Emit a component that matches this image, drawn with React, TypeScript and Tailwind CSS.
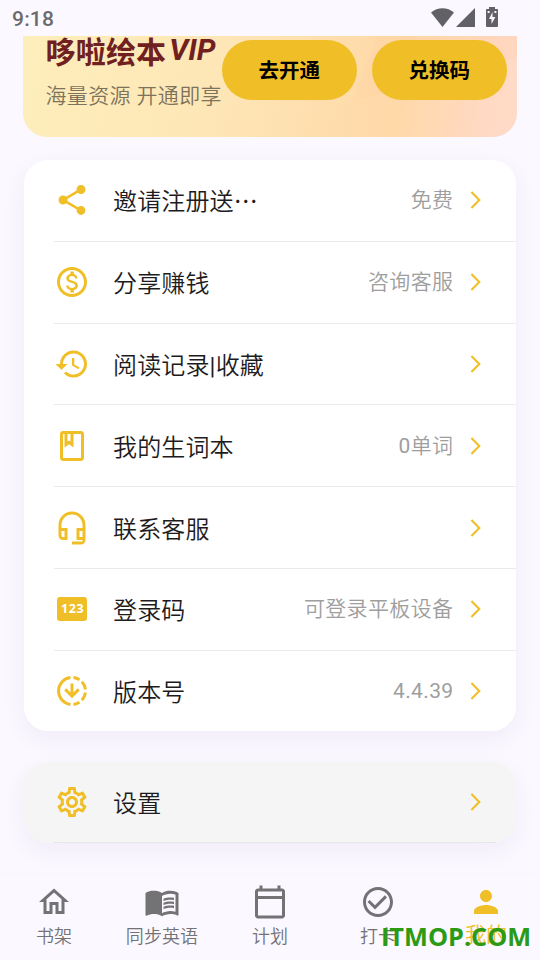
import type { ReactNode } from "react";
import type { IconType } from "react-icons";
import {
  MdShare,
  MdOutlineMonetizationOn,
  MdHistory,
  MdOutlineClass,
  MdOutlineHeadsetMic,
  MdOutlineSettings,
  MdOutlineHome,
  MdMenuBook,
  MdOutlineCalendarToday,
  MdCheckCircleOutline,
  MdPerson,
} from "react-icons/md";

type IconProps = { className?: string };
type Icon = IconType | ((props: IconProps) => ReactNode);
type Item = { icon: Icon; title: string; ellipsis?: boolean; value?: string };

function PinIcon({ className }: IconProps) {
  return (
    <svg className={className} viewBox="0 0 36 36" fill="currentColor">
      <rect x="3" y="6" width="30" height="24" rx="3" />
      <text x="18.600" y="22.300" textAnchor="middle" className="fill-white font-['Open_Sans',sans-serif] text-[12.5px] font-bold tracking-[0.5px]">
        123
      </text>
    </svg>
  );
}

function DownloadingIcon({ className }: IconProps) {
  return (
    <svg className={className} viewBox="0 0 24 24" fill="none" stroke="currentColor" strokeWidth="2">
      <path d="M11 3.060A9 9 0 0 0 11 20.940M13 3.060A9 9 0 0 1 17 4.520M18.600 5.880A9 9 0 0 1 20.940 11M20.940 13A9 9 0 0 1 18.600 18.120M17 19.480A9 9 0 0 1 13 20.940" />
      <path d="M12 7V15.300M7.500 10.900 12 15.400 16.500 10.900" />
    </svg>
  );
}

const items: Item[] = [
  { icon: MdShare, title: "邀请注册送", ellipsis: true, value: "免费" },
  { icon: MdOutlineMonetizationOn, title: "分享赚钱", value: "咨询客服" },
  { icon: MdHistory, title: "阅读记录|收藏" },
  { icon: MdOutlineClass, title: "我的生词本", value: "0单词" },
  { icon: MdOutlineHeadsetMic, title: "联系客服" },
  { icon: PinIcon, title: "登录码", value: "可登录平板设备" },
  { icon: DownloadingIcon, title: "版本号", value: "4.4.39" },
];

const tabs: { icon: IconType; label: string; active?: boolean }[] = [
  { icon: MdOutlineHome, label: "书架" },
  { icon: MdMenuBook, label: "同步英语" },
  { icon: MdOutlineCalendarToday, label: "计划" },
  { icon: MdCheckCircleOutline, label: "打卡" },
  { icon: MdPerson, label: "我的", active: true },
];

// Latin runs use the regular weight, Chinese runs the lighter inherited one.
function Mixed({ text }: { text: string }) {
  return text.split(/([\x21-\x7e]+)/).map((run, i) =>
    i % 2 === 1 ? (
      <span key={i} className="font-normal">
        {run}
      </span>
    ) : (
      run
    ),
  );
}

function Chevron() {
  return (
    <svg className="ml-[16px] h-[18px] w-[12px] shrink-0" viewBox="0 0 12 18" fill="none" stroke="#f0bf28" strokeWidth="2.1">
      <path d="M1.400 0.900 9.300 9 1.400 17.100" />
    </svg>
  );
}

function Row({ icon: RowIcon, title, ellipsis, value }: Item) {
  return (
    <div className="flex h-[80.8px] items-center pr-[34.500px] pl-[30px]">
      <RowIcon className="size-9 shrink-0 text-[#f0bf28]" />
      <span className="ml-[23px] flex-1 pt-[4px] text-[24px] leading-9 tracking-[0.15px] text-[#1d1b20]">
        <Mixed text={title} />
        {ellipsis && <span className="font-['Noto_Sans_CJK_SC',sans-serif] leading-none font-normal">…</span>}
      </span>
      <span className="text-[21px] leading-[30px] tracking-[0.375px] text-[#9e9e9e]">
        <Mixed text={value ?? ""} />
      </span>
      <Chevron />
    </div>
  );
}

function PillButton({ children }: { children: ReactNode }) {
  return (
    <button className="h-[60px] w-[135px] rounded-full bg-[#f0bf28] pt-[3px] text-[20.5px] font-bold text-black">
      {children}
    </button>
  );
}

function StatusBar() {
  return (
    <div className="flex h-9 shrink-0 justify-between pr-[42px] pl-3">
      <span className="pt-[4px] text-[21px] leading-[30px] font-medium tracking-[0.2px] text-[#6b6a6e]">9:18</span>
      <svg className="mt-[6px] h-[22px] w-[68px]" viewBox="0 0 68 22" fill="#626165">
        <path d="M1 6.500C7.500 .7 17.500 .7 24 6.500L12.500 21Z" />
        <path d="M26 21 45 2V21Z" />
        <path
          fillRule="evenodd"
          d="M59 1h6v2h2.200q.8 0 .8 .8V20q0 1-1 1H57q-1 0-1-1V3.800q0-.8 .8-.8H59ZM57.600 5v2h2V5ZM64.400 5v2h2V5ZM62.500 6 59 13h2.500v5L65.400 11H62.500Z"
        />
      </svg>
    </div>
  );
}

export default function App() {
  return (
    <div className="relative flex h-[960px] w-[540px] flex-col overflow-hidden bg-[#fbf8ff] font-[Roboto,'Noto_Sans_CJK_SC',sans-serif] font-[350]">
      <StatusBar />
      <main className="flex flex-1 flex-col">
        <section className="relative ml-[22.600px] flex h-[101px] w-[494.600px] shrink-0 overflow-hidden rounded-b-[24px] bg-[linear-gradient(100deg,#fdeebb_0%,#fee6b6_40%,#ffd8a8_75%,#ffdcc8_97%)]">
          <svg className="absolute inset-0 h-full w-full" viewBox="0 0 494 101">
            <path d="M354 0 328 66C350 60 410 45 494 22V0Z" fill="#ffc99a" fillOpacity=".15" />
            <path d="M419 101 450 0H494V101Z" fill="#ffd2c4" fillOpacity=".15" />
          </svg>
          <div className="relative w-[199.200px] shrink-0 pl-[22.900px] whitespace-nowrap">
            <h1 className="flex h-[34px] text-[#702020]">
              <span className="text-[30px] leading-[34px] font-bold tracking-[0.2px]">哆啦绘本</span>
              <span className="ml-[3px] text-[30px] leading-[28px] font-bold italic">VIP</span>
            </h1>
            <p className="mt-[11px] text-[21px] leading-[30px] tracking-[0.375px] text-[#7d735b]">海量资源 开通即享</p>
          </div>
          <div className="relative mt-[4px] flex gap-[15px]">
            <PillButton>去开通</PillButton>
            <PillButton>兑换码</PillButton>
          </div>
        </section>

        <section className="mt-[23px] ml-6 h-[571px] w-[492px] shrink-0 rounded-[24px] bg-white shadow-[0_8px_24px_rgba(80,55,115,0.06)]">
          {items.map((item, i) => (
            <div key={item.title}>
              {i > 0 && <div className="ml-[30px] h-px bg-[#ebebeb]" />}
              <Row {...item} />
            </div>
          ))}
        </section>

        <section className="mt-[30.600px] ml-6 h-[81px] w-[492px] shrink-0 rounded-[24px] bg-[#f5f5f5] shadow-[0_8px_24px_rgba(80,55,115,0.06)]">
          <Row icon={MdOutlineSettings} title="设置" />
          <div className="mr-[20px] ml-[30px] h-px bg-[#e8e5e9]" />
        </section>
      </main>

      <nav className="grid h-[87px] shrink-0 grid-cols-5 border-t border-[#f8f5fc] bg-[#fbf8ff]">
        {tabs.map(({ icon: TabIcon, label, active }) => (
          <div key={label} className={active ? "flex flex-col items-center pt-[10px] text-[#f0bf28]" : "flex flex-col items-center pt-[10px] text-[#737275]"}>
            <TabIcon className="size-9" />
            <span className={active ? "text-[21px] leading-[30px]" : "mt-[3px] text-[18px] leading-[27px] tracking-[0.1px]"}>{label}</span>
          </div>
        ))}
      </nav>
      <div className="absolute top-[919px] left-[381px] font-['Open_Sans',sans-serif] text-[25.300px] leading-[34px] font-bold whitespace-nowrap text-[#2b9a14]">
        ITMOP.COM
      </div>
    </div>
  );
}
